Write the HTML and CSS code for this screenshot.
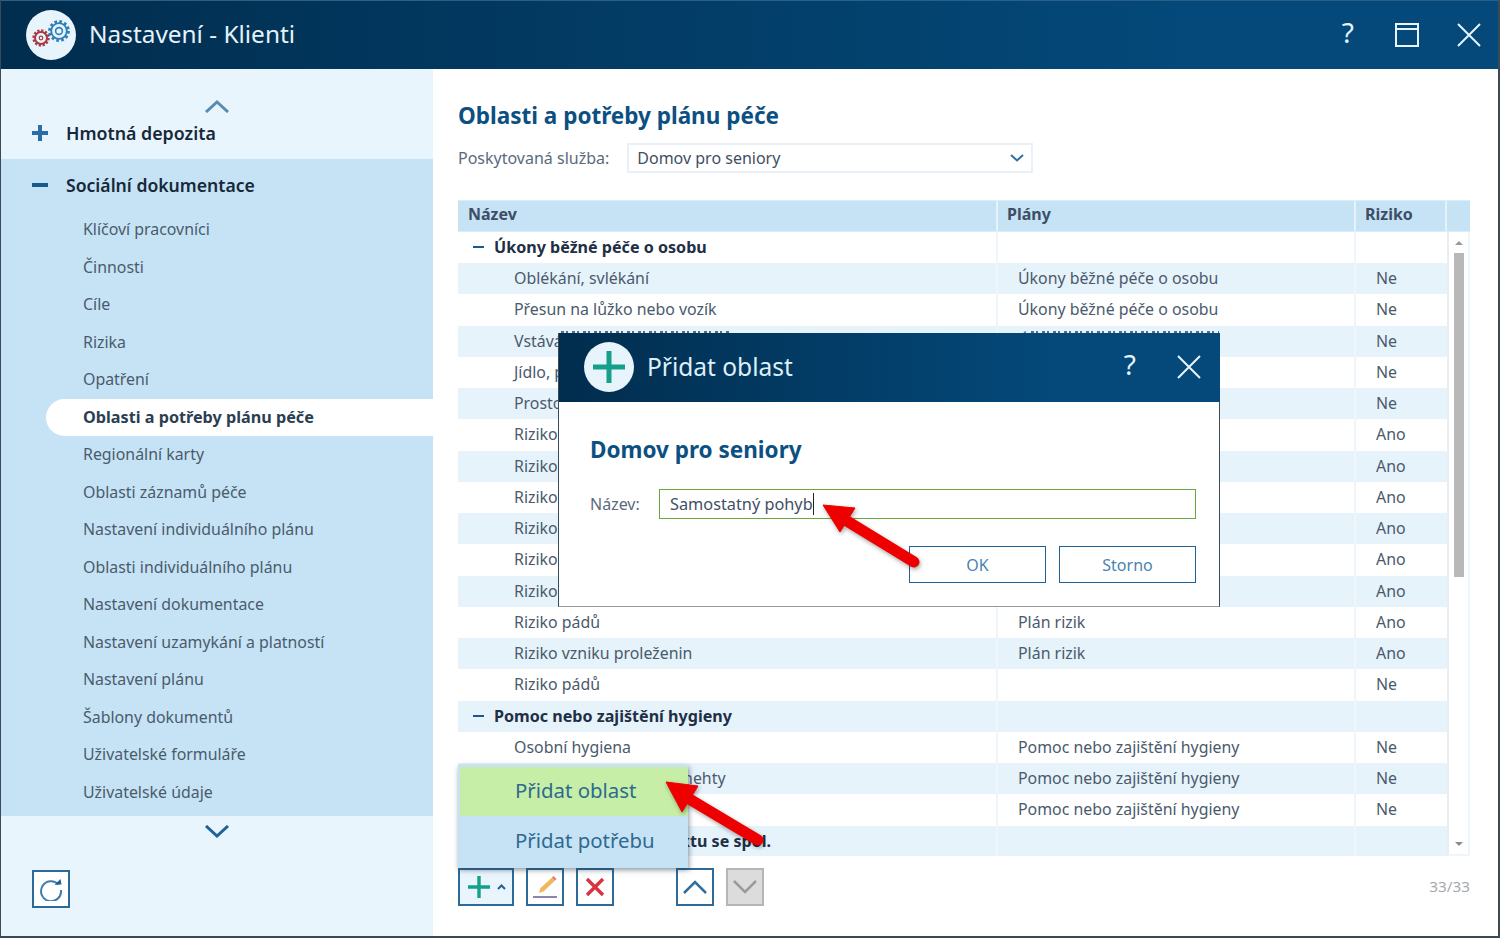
FILE: index.html
```html
<!DOCTYPE html>
<html lang="cs">
<head>
<meta charset="utf-8">
<title>Nastavení - Klienti</title>
<link rel="stylesheet" href="styles.css">
</head>
<body>
<div class="window">
  <header class="titlebar">
    <div class="logo">
      <svg width="50" height="50" viewBox="0 0 50 50">
        <circle cx="33" cy="21" r="9.200" fill="none" stroke="#2f7fb8" stroke-width="3.400" stroke-dasharray="2.600 2.220"/>
        <circle cx="33" cy="21" r="7.800" fill="none" stroke="#2f7fb8" stroke-width="1.800"/>
        <circle cx="33" cy="21" r="3.400" fill="none" stroke="#2f7fb8" stroke-width="1.600"/>
        <circle cx="15" cy="28" r="7.200" fill="none" stroke="#a83a44" stroke-width="3" stroke-dasharray="2.100 1.670"/>
        <circle cx="15" cy="28" r="6" fill="none" stroke="#a83a44" stroke-width="2"/>
        <circle cx="15" cy="28" r="1.800" fill="none" stroke="#a83a44" stroke-width="1.200"/>
      </svg>
    </div>
    <h1 class="app-title">Nastavení - Klienti</h1>
    <div class="win-controls">
      <span class="help">?</span>
      <svg class="ctl-max" width="24" height="24" viewBox="0 0 24 24"><path d="M1 1h22v22H1zM1 6h22" fill="none" stroke="#e8f4fc" stroke-width="2"/></svg>
      <svg class="ctl-close" width="26" height="26" viewBox="0 0 26 26"><path d="M2 2l22 22M24 2L2 24" fill="none" stroke="#e8f4fc" stroke-width="2"/></svg>
    </div>
  </header>

  <div class="content">
    <aside class="sidebar">
      <div class="side-top">
        <svg class="chev" width="26" height="14" viewBox="0 0 26 14"><path d="M2 13L13 3l11 10" fill="none" stroke="#5a8bb0" stroke-width="3"/></svg>
        <div class="section-head">
          <svg width="16" height="16" viewBox="0 0 16 16"><path d="M8 0v16M0 8h16" stroke="#2c6ea3" stroke-width="4"/></svg>
          <span>Hmotná depozita</span>
        </div>
      </div>
      <nav class="side-open">
        <div class="section-head open">
          <svg width="16" height="16" viewBox="0 0 16 16"><path d="M0 8h16" stroke="#165a90" stroke-width="4"/></svg>
          <span>Sociální dokumentace</span>
        </div>
        <ul class="side-list">
          <li>Klíčoví pracovníci</li>
          <li>Činnosti</li>
          <li>Cíle</li>
          <li>Rizika</li>
          <li>Opatření</li>
          <li class="active">Oblasti a potřeby plánu péče</li>
          <li>Regionální karty</li>
          <li>Oblasti záznamů péče</li>
          <li>Nastavení individuálního plánu</li>
          <li>Oblasti individuálního plánu</li>
          <li>Nastavení dokumentace</li>
          <li>Nastavení uzamykání a platností</li>
          <li>Nastavení plánu</li>
          <li>Šablony dokumentů</li>
          <li>Uživatelské formuláře</li>
          <li>Uživatelské údaje</li>
        </ul>
      </nav>
      <div class="side-bottom">
        <svg class="chev" width="26" height="14" viewBox="0 0 26 14"><path d="M2 1l11 10L24 1" fill="none" stroke="#1f6297" stroke-width="3"/></svg>
        <button class="tool refresh">
          <svg width="24" height="24" viewBox="0 0 24 24"><path d="M19.500 7.500A10 10 0 1 0 22 13" fill="none" stroke="#3d7eaf" stroke-width="2"/><path d="M15.500 7.800l7-.3-1-5.500z" fill="#1f6297"/></svg>
        </button>
      </div>
    </aside>

    <main class="main">
      <h2 class="page-title">Oblasti a potřeby plánu péče</h2>
      <div class="filter">
        <label class="filter-label">Poskytovaná služba:</label>
        <div class="select">
          <span>Domov pro seniory</span>
          <svg width="14" height="8" viewBox="0 0 14 8"><path d="M1 1l6 5.500 6-5.500" fill="none" stroke="#2f6f9f" stroke-width="2"/></svg>
        </div>
      </div>

      <div class="grid">
        <div class="grid-head">
          <div>Název</div><div>Plány</div><div>Riziko</div><div></div>
        </div>
        <div class="grid-body">
          <div class="rows">
            <div class="row group"><div class="c1"><i class="minus"></i>Úkony běžné péče o osobu</div><div></div><div></div></div>
            <div class="row"><div class="c1">Oblékání, svlékání</div><div class="c2">Úkony běžné péče o osobu</div><div class="c3">Ne</div></div>
            <div class="row"><div class="c1">Přesun na lůžko nebo vozík</div><div class="c2">Úkony běžné péče o osobu</div><div class="c3">Ne</div></div>
            <div class="row"><div class="c1">Vstávání a uléhání, změna polohy</div><div class="c2">Úkony běžné péče o osobu</div><div class="c3">Ne</div></div>
            <div class="row"><div class="c1">Jídlo, pití</div><div class="c2">Úkony běžné péče o osobu</div><div class="c3">Ne</div></div>
            <div class="row"><div class="c1">Prostorová orientace</div><div class="c2">Úkony běžné péče o osobu</div><div class="c3">Ne</div></div>
            <div class="row"><div class="c1">Riziko pádů</div><div class="c2">Plán rizik</div><div class="c3">Ano</div></div>
            <div class="row"><div class="c1">Riziko vzniku proleženin</div><div class="c2">Plán rizik</div><div class="c3">Ano</div></div>
            <div class="row"><div class="c1">Riziko pádů</div><div class="c2">Plán rizik</div><div class="c3">Ano</div></div>
            <div class="row"><div class="c1">Riziko vzniku proleženin</div><div class="c2">Plán rizik</div><div class="c3">Ano</div></div>
            <div class="row"><div class="c1">Riziko pádů</div><div class="c2">Plán rizik</div><div class="c3">Ano</div></div>
            <div class="row"><div class="c1">Riziko vzniku proleženin</div><div class="c2">Plán rizik</div><div class="c3">Ano</div></div>
            <div class="row"><div class="c1">Riziko pádů</div><div class="c2">Plán rizik</div><div class="c3">Ano</div></div>
            <div class="row"><div class="c1">Riziko vzniku proleženin</div><div class="c2">Plán rizik</div><div class="c3">Ano</div></div>
            <div class="row"><div class="c1">Riziko pádů</div><div class="c2"></div><div class="c3">Ne</div></div>
            <div class="row group"><div class="c1"><i class="minus"></i>Pomoc nebo zajištění hygieny</div><div></div><div></div></div>
            <div class="row"><div class="c1">Osobní hygiena</div><div class="c2">Pomoc nebo zajištění hygieny</div><div class="c3">Ne</div></div>
            <div class="row"><div class="c1">Péče o vlasy, pokožku, nehty</div><div class="c2">Pomoc nebo zajištění hygieny</div><div class="c3">Ne</div></div>
            <div class="row"><div class="c1">Použití WC</div><div class="c2">Pomoc nebo zajištění hygieny</div><div class="c3">Ne</div></div>
            <div class="row group"><div class="c1"><i class="minus"></i>Pomoc s tvorbou kontaktu se spol.</div><div></div><div></div></div>
          </div>
          <div class="scrollbar">
            <i class="arrow-up"></i>
            <div class="track"><div class="thumb"></div></div>
            <i class="arrow-down"></i>
          </div>
        </div>
      </div>

      <div class="toolbar">
        <button class="tool add">
          <svg width="24" height="24" viewBox="0 0 24 24"><path d="M12 1v22M1 12h22" stroke="#15a08a" stroke-width="3.400"/></svg>
          <svg width="9" height="6" viewBox="0 0 9 6"><path d="M1 5l3.500-3.500L8 5" fill="none" stroke="#1f6297" stroke-width="2"/></svg>
        </button>
        <button class="tool">
          <svg width="26" height="26" viewBox="0 0 26 26"><path d="M7 19l1.500-5L20 3.500l3 3L11.500 17.500z" fill="#f0b75e"/><path d="M20 3.500l1.500-1.500 3 3-1.500 1.500z" fill="#e8766a"/><path d="M1 23h24" stroke="#8b87a6" stroke-width="2"/></svg>
        </button>
        <button class="tool">
          <svg width="22" height="22" viewBox="0 0 22 22"><path d="M3 3l16 16M19 3L3 19" stroke="#d9333f" stroke-width="3.400"/></svg>
        </button>
        <button class="tool up">
          <svg width="24" height="14" viewBox="0 0 24 14"><path d="M1 13L12 2l11 11" fill="none" stroke="#2f6f9f" stroke-width="2.500"/></svg>
        </button>
        <button class="tool disabled">
          <svg width="24" height="14" viewBox="0 0 24 14"><path d="M1 1l11 11L23 1" fill="none" stroke="#9a9a9a" stroke-width="2.500"/></svg>
        </button>
        <span class="counter">33/33</span>
      </div>

      <div class="menu">
        <div class="menu-item hot">Přidat oblast</div>
        <div class="menu-item">Přidat potřebu</div>
      </div>
    </main>
  </div>

  <section class="dialog">
    <div class="dlg-head">
      <div class="dlg-icon">
        <svg width="34" height="34" viewBox="0 0 34 34"><path d="M17 1v32M1 17h32" stroke="#15a08a" stroke-width="5"/></svg>
      </div>
      <h3 class="dlg-title">Přidat oblast</h3>
      <span class="dlg-help">?</span>
      <svg width="26" height="26" viewBox="0 0 26 26"><path d="M2 2l22 22M24 2L2 24" fill="none" stroke="#e8f4fc" stroke-width="2"/></svg>
    </div>
    <div class="dlg-body">
      <h4 class="dlg-sub">Domov pro seniory</h4>
      <div class="dlg-field">
        <label class="dlg-label">Název:</label>
        <div class="dlg-input"><span>Samostatný pohyb</span><i class="caret"></i></div>
      </div>
      <div class="dlg-actions">
        <button class="dlg-btn">OK</button>
        <button class="dlg-btn">Storno</button>
      </div>
    </div>
  </section>

  <svg class="arrows" width="1500" height="938" viewBox="0 0 1500 938">
    <g fill="#ee0000" stroke="#ee0000" stroke-linejoin="round">
      <path d="M842 518L914 562" stroke-width="11" stroke-linecap="round"/>
      <path d="M823 505L855 508L840 532z" stroke-width="1"/>
      <path d="M686 797L758 840" stroke-width="11" stroke-linecap="round"/>
      <path d="M666 782L698 786L682 812z" stroke-width="1"/>
    </g>
  </svg>
</div>
</body>
</html>
```

FILE: styles.css
```css
* { box-sizing: border-box; }
html, body { margin: 0; padding: 0; }
body { font-family: "Noto Sans", "Open Sans", sans-serif; background: #fff; color: #4a5a6c; }
button { font-family: inherit; }

.window {
  position: relative;
  width: 1500px;
  height: 938px;
  overflow: hidden;
  display: flex;
  flex-direction: column;
  border-left: 1px solid #3c4a55;
  border-right: 2px solid #3c4a55;
  border-bottom: 2px solid #3c4a55;
}

/* title bar */
.titlebar {
  height: 69px;
  flex: none;
  display: flex;
  align-items: center;
  padding: 0 0 1px 25px;
  background: linear-gradient(90deg, #012d4e 0%, #04497a 80%, #04497a 100%);
  border-top: 1px solid #2a5f88;
}
.logo {
  width: 50px;
  height: 50px;
  border-radius: 50%;
  background: #e8f4fc;
  flex: none;
}
.app-title {
  margin: 0 0 2px 13px;
  font-size: 24.400px;
  font-weight: 400;
  color: #e6f2fa;
}
.win-controls {
  margin-left: auto;
  display: flex;
  align-items: center;
  padding-right: 16px;
}
.help, .dlg-help {
  font-size: 28px;
  line-height: 1;
  color: #e8f4fc;
  margin-bottom: 5px;
}
.ctl-max { margin-left: 41px; }
.ctl-close { margin-left: 37px; }

/* layout */
.content { flex: 1; display: flex; min-height: 0; }

/* sidebar */
.sidebar {
  width: 432px;
  flex: none;
  background: #e9f5fc;
  display: flex;
  flex-direction: column;
}
.side-top { height: 90px; padding-top: 30px; }
.chev { display: block; margin: 0 auto; }
.section-head {
  display: flex;
  align-items: center;
  gap: 18px;
  padding-left: 31px;
  font-size: 17.800px;
  font-weight: 600;
  color: #17283a;
  margin-top: 8px;
}
.section-head.open { margin-top: 0; height: 52px; font-size: 17.600px; }
.side-open { background: #c5e3f5; height: 657px; }
.side-list {
  list-style: none;
  margin: 0 0 0 45px;
  padding: 0;
}
.side-list li {
  height: 37.500px;
  line-height: 37.500px;
  padding-left: 37px;
  font-size: 15.900px;
  color: #4b5b6c;
}
.side-list li.active {
  background: #fff;
  border-radius: 19px 0 0 19px;
  font-size: 16.200px;
  font-weight: 700;
  color: #2b3e52;
}
.side-bottom { padding-top: 9px; }
.refresh { margin: 31px 0 0 31px; }

/* main */
.main {
  position: relative;
  flex: 1;
  padding: 0 28px 0 25px;
  background: #fff;
}
.page-title {
  margin: 32px 0 0;
  height: 30px;
  line-height: 30px;
  font-size: 22.500px;
  font-weight: 700;
  color: #0c5082;
}
.filter {
  margin-top: 12px;
  display: flex;
  align-items: center;
  gap: 18px;
}
.filter-label { font-size: 16px; color: #5a6a7b; }
.select {
  width: 406px;
  height: 30px;
  border: 2px solid #e9f0fa;
  display: flex;
  align-items: center;
  justify-content: space-between;
  padding: 0 7px 0 8px;
  font-size: 16px;
  color: #3f5063;
}

/* data grid */
.grid { margin-top: 27px; width: 1012px; }
.grid-head {
  height: 31.750px;
  display: grid;
  grid-template-columns: 540px 358px 91px 23px;
  background: #c5e3f5;
  border: 1px solid #dcedf8;
  border-width: 1px 0;
  font-weight: 700;
  font-size: 16px;
  color: #3d4e66;
}
.grid-head div {
  padding-left: 9px;
  line-height: 27px;
  border-right: 2px solid #e6f2fb;
}
.grid-head div:first-child { padding-left: 10px; }
.grid-head div:last-child { border-right: 0; }
.grid-body { display: flex; height: 624px; }
.rows { width: 989px; overflow: hidden; }
.row {
  height: 31.250px;
  line-height: 31px;
  display: grid;
  grid-template-columns: 540px 358px 91px;
  font-size: 15.900px;
  color: #4a5a6c;
}
.row:nth-child(even) { background: #e6f3fb; }
.row > div { border-right: 2px solid #eef5fb; white-space: nowrap; overflow: hidden; }
.row > div:last-child { border-right: 0; }
.c1 { padding-left: 56px; }
.c2 { padding-left: 20px; }
.c3 { padding-left: 20px; }
.group { font-weight: 700; font-size: 16.100px; color: #1f2f45; }
.group .c1 { padding-left: 15px; display: flex; align-items: center; }
.minus {
  width: 11px;
  height: 2px;
  background: #165a90;
  margin-right: 10px;
  flex: none;
}

.scrollbar {
  width: 23px;
  border-left: 2px solid #e9eef3;
  border-right: 2px solid #eef5fb;
  border-bottom: 2px solid #eef5fb;
  display: flex;
  flex-direction: column;
  align-items: center;
  padding: 9px 0 8px;
}
.track { flex: 1; width: 100%; margin: 8px 0; padding-left: 5px; }
.thumb { width: 10px; height: 324px; background: #b8b8b8; }
.arrow-up, .arrow-down {
  width: 0;
  height: 0;
  border-left: 4px solid transparent;
  border-right: 4px solid transparent;
}
.arrow-up { border-bottom: 4px solid #9a9a9a; }
.arrow-down { border-top: 4px solid #8a8a8a; }

/* toolbar */
.toolbar {
  margin-top: 12.250px;
  display: flex;
  align-items: center;
  height: 37px;
  width: 1012px;
}
.tool {
  width: 38px;
  height: 38px;
  padding: 0;
  border: 2px solid #2c6a9a;
  background: #fff;
  display: flex;
  align-items: center;
  justify-content: center;
  margin-right: 12px;
}
.tool.add { width: 56px; background: #e9f5fc; gap: 6px; }
.tool.up { margin-left: 50px; }
.tool.disabled { background: #dcdcdc; border-color: #b5b5b5; }
.counter { margin: 0 0 2px auto; font-size: 15.300px; color: #a5a9ae; }

/* dropdown menu */
.menu {
  position: absolute;
  left: 25px;
  top: 696px;
  width: 230px;
  height: 103px;
  padding: 2px 0 0 2px;
  background: #c5e3f5;
  box-shadow: 1px 2px 5px rgba(40, 60, 80, .55);
  font-size: 20.400px;
  color: #2f6a90;
}
.menu-item { height: 49px; line-height: 47px; padding-left: 55px; }
.menu-item + .menu-item { height: 50px; line-height: 49px; }
.menu-item.hot { background: #c6eea6; }

/* dialog */
.dialog {
  position: absolute;
  left: 557px;
  top: 333px;
  width: 662px;
  height: 274px;
  background: #fff;
  border-left: 1px solid #3c4a55;
  border-right: 1px solid #3c4a55;
  border-bottom: 1px solid #999;
  z-index: 2;
}
.dialog::before, .dialog::after {
  content: "";
  position: absolute;
  top: -2px;
  height: 2px;
  background: repeating-linear-gradient(90deg, #5a6a7c 0 3px, transparent 3px 5px, #5a6a7c 5px 7px, transparent 7px 11px);
}
.dialog::before { left: 2px; width: 170px; }
.dialog::after { left: 472px; width: 188px; }
.dlg-head {
  height: 69px;
  margin-right: -1px;
  display: flex;
  align-items: center;
  padding: 0 18px 2px 25px;
  background: linear-gradient(90deg, #012d4e 0%, #04497a 75%, #04497a 100%);
}
.dlg-icon {
  width: 50px;
  height: 50px;
  border-radius: 50%;
  background: #e8f4fc;
  display: flex;
  align-items: center;
  justify-content: center;
  flex: none;
}
.dlg-title {
  margin: 0 0 0 13px;
  font-size: 24.500px;
  font-weight: 400;
  color: #dfeef8;
}
.dlg-help { margin-left: auto; margin-right: 40px; }
.dlg-body { padding: 33px 23px 0 31px; }
.dlg-sub {
  margin: 0;
  height: 30px;
  line-height: 30px;
  font-size: 22.500px;
  font-weight: 700;
  color: #0c5082;
}
.dlg-field { margin-top: 24px; display: flex; align-items: center; }
.dlg-label { width: 69px; font-size: 16px; color: #5a6a7b; }
.dlg-input {
  flex: 1;
  height: 30px;
  border: 1px solid #68a83e;
  display: flex;
  align-items: center;
  padding-left: 10px;
  font-size: 16.300px;
  color: #3f5063;
}
.caret { width: 1px; height: 22px; background: #222; }
.dlg-actions {
  margin-top: 27px;
  display: flex;
  justify-content: flex-end;
  gap: 13px;
}
.dlg-btn {
  width: 137px;
  height: 37px;
  padding: 0;
  border: 1px solid #1f6297;
  background: #fff;
  font-size: 16px;
  color: #4a84b0;
}

/* annotation arrows */
.arrows {
  position: absolute;
  left: -1px;
  top: 0;
  z-index: 3;
  pointer-events: none;
  filter: drop-shadow(1px 2px 2px rgba(0, 0, 0, .35));
}
```
